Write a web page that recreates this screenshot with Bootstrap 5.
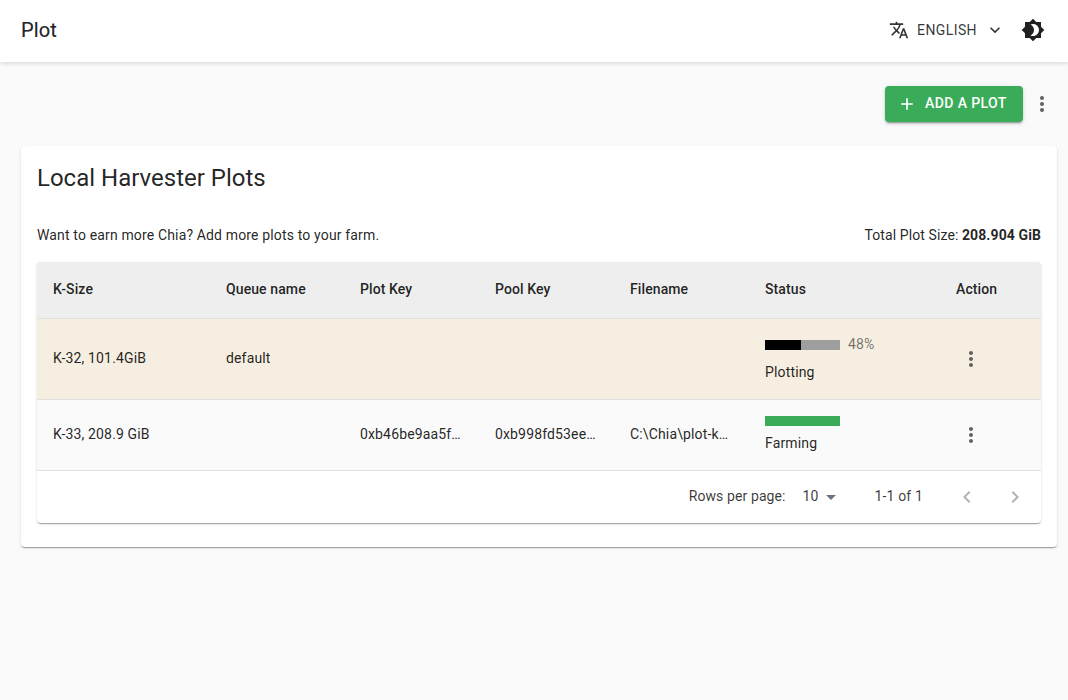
<!DOCTYPE html>
<html lang="en"><head><meta charset="utf-8"><title>Plot</title>
<link href="https://cdn.jsdelivr.net/npm/bootstrap@5.3.0/dist/css/bootstrap.min.css" rel="stylesheet">
<style>
body{background:#fafafa;font-family:Roboto,"Liberation Sans",sans-serif;color:rgba(0,0,0,.87);font-size:14px;height:700px;overflow:hidden}
svg{fill:currentColor;display:block;flex:none}
.top-bar{height:62px;background:#fff;box-shadow:0 1px 5px 0 rgba(0,0,0,.1),0 2px 4px 0 rgba(0,0,0,.05);padding:0 23px 3px 21px}
.top-title{font-size:20px;margin:0;line-height:32px;font-weight:400;letter-spacing:.15px;-webkit-text-stroke:.2px}
.lang-btn{font-size:14px;letter-spacing:.4px;color:rgba(0,0,0,.8);margin-right:16px}
.lang-label{margin:0 8px;line-height:1}
.page-wrap{padding:24px 11px 0 21px}
.act-row{height:36px;margin-bottom:24px}
.add-btn{background:#3aac59;border:0;color:#fff;font-weight:500;font-size:14px;letter-spacing:.4px;height:36px;width:138px;border-radius:4px;box-shadow:0 3px 1px -2px rgba(0,0,0,.2),0 2px 2px 0 rgba(0,0,0,.14),0 1px 5px 0 rgba(0,0,0,.12);gap:8px}
.add-btn.btn{padding:0 0 1px 12px}
.add-btn:hover{background:#3aac59;color:#fff}
.more-top{color:#616161;margin:0 3px 0 7px}
.outer-panel{background:#fff;border:0;border-radius:4px;box-shadow:0 2px 1px -1px rgba(0,0,0,.2),0 1px 1px 0 rgba(0,0,0,.14),0 1px 3px 0 rgba(0,0,0,.12);padding:16px;height:401px;width:1036px}
.panel-title{font-size:24px;font-weight:400;line-height:32px;margin:0 0 31px}
.info-row{line-height:20px;margin-bottom:17px;letter-spacing:.15px}
.info-total{letter-spacing:.1px}
.info-row b{font-weight:700}
.inner-panel{border-radius:4px;box-shadow:0 2px 1px -1px rgba(0,0,0,.2),0 1px 1px 0 rgba(0,0,0,.14),0 1px 3px 0 rgba(0,0,0,.12);background:#fff;overflow:hidden}
.plots{table-layout:fixed;width:1004px;margin:0;border-collapse:collapse;--bs-table-bg:transparent}
.plots th,.plots td{padding:0 16px;vertical-align:middle;border-bottom:1px solid #e0e0e0;white-space:nowrap;font-size:14px;color:rgba(0,0,0,.87);letter-spacing:.15px}
.plots th{font-weight:500;height:56px;background:#eee;letter-spacing:.1px}
.c1{width:173px}.c2{width:134px}.c3{width:135px}.c6{width:191px}.c7{width:101px}
.row-plotting td{height:81px;background:#f6eee0}
.row-farming td{height:71px;background:#fafafa}
.plots td.status-a{padding-top:2px}
.plots td.status-b{padding-bottom:1px}
.bar-track{width:75px;height:10px;flex:none;background:#9e9e9e}
.bar-fill{background:#000;height:100%}
.bar-done{background:#3aac59}
.pct{color:rgba(0,0,0,.54);font-size:14px;margin:0 0 2px 8px;line-height:12px}
.stat-plot{line-height:20px}
.status-a .stat-plot{margin-top:10px}
.status-b .stat-plot{margin-top:7px}
.row-icon{color:#616161;margin-left:3px}
.pager{height:52px;padding-right:14px;color:rgba(0,0,0,.78);letter-spacing:.1px}
.pg-num{margin-left:17px}
.pg-range{margin:0 32px;letter-spacing:.15px}
.pg-nav{color:rgba(0,0,0,.3)}
</style></head><body>
<nav class="top-bar d-flex align-items-center justify-content-between">
  <h1 class="top-title">Plot</h1>
  <div class="d-flex align-items-center">
    <div class="lang-btn d-flex align-items-center">
      <svg width="20" height="20" viewBox="0 0 24 24"><path d="M12.87 15.07l-2.54-2.51.03-.03c1.74-1.94 2.98-4.17 3.71-6.53H17V4h-7V2H8v2H1v1.99h11.17C11.5 7.92 10.44 9.75 9 11.35 8.07 10.32 7.3 9.19 6.69 8h-2c.73 1.63 1.73 3.17 2.98 4.56l-5.09 5.02L4 19l5-5 3.11 3.11.76-2.04zM18.5 10h-2L12 22h2l1.12-3h4.75L21 22h2l-4.5-12zm-2.62 7l1.62-4.33L19.12 17h-3.24z"/></svg>
      <span class="lang-label">ENGLISH</span>
      <svg width="20" height="20" viewBox="0 0 24 24"><path d="M16.59 8.59L12 13.17 7.41 8.59 6 10l6 6 6-6z"/></svg>
    </div>
    <svg width="24" height="24" viewBox="0 0 24 24"><path d="M20 8.69V4h-4.69L12 .69 8.69 4H4v4.69L.69 12 4 15.31V20h4.69L12 23.31 15.31 20H20v-4.69L23.31 12 20 8.69zM12 18c-.89 0-1.74-.2-2.5-.55C11.56 16.5 13 14.42 13 12s-1.44-4.5-3.5-5.45C10.26 6.2 11.11 6 12 6c3.31 0 6 2.69 6 6s-2.69 6-6 6z"/></svg>
  </div>
</nav>
<main class="page-wrap">
  <div class="act-row d-flex justify-content-end align-items-center">
    <button class="btn add-btn d-flex align-items-center" type="button">
      <svg width="20" height="20" viewBox="0 0 24 24"><path d="M19 13h-6v6h-2v-6H5v-2h6V5h2v6h6v2z"/></svg>ADD A PLOT
    </button>
    <svg class="more-top" width="24" height="24" viewBox="0 0 24 24"><path d="M12 8c1.1 0 2-.9 2-2s-.9-2-2-2-2 .9-2 2 .9 2 2 2zm0 2c-1.1 0-2 .9-2 2s.9 2 2 2 2-.9 2-2-.9-2-2-2zm0 6c-1.1 0-2 .9-2 2s.9 2 2 2 2-.9 2-2-.9-2-2-2z"/></svg>
  </div>
  <section class="outer-panel">
    <h2 class="panel-title">Local Harvester Plots</h2>
    <div class="info-row d-flex justify-content-between">
      <span>Want to earn more Chia? Add more plots to your farm.</span>
      <span class="info-total">Total Plot Size: <b>208.904 GiB</b></span>
    </div>
    <div class="inner-panel">
      <table class="table plots">
        <thead><tr><th class="c1">K-Size</th><th class="c2">Queue name</th><th class="c3">Plot Key</th><th class="c3">Pool Key</th><th class="c3">Filename</th><th class="c6">Status</th><th class="c7">Action</th></tr></thead>
        <tbody>
          <tr class="row-plotting"><td>K-32, 101.4GiB</td><td>default</td><td></td><td></td><td></td>
            <td class="status-a"><div class="d-flex align-items-center"><div class="bar-track"><div class="bar-fill" style="width:48%"></div></div><span class="pct">48%</span></div><div class="stat-plot">Plotting</div></td>
            <td><svg class="row-icon" width="24" height="24" viewBox="0 0 24 24"><path d="M12 8c1.1 0 2-.9 2-2s-.9-2-2-2-2 .9-2 2 .9 2 2 2zm0 2c-1.1 0-2 .9-2 2s.9 2 2 2 2-.9 2-2-.9-2-2-2zm0 6c-1.1 0-2 .9-2 2s.9 2 2 2 2-.9 2-2-.9-2-2-2z"/></svg></td></tr>
          <tr class="row-farming"><td>K-33, 208.9 GiB</td><td></td><td>0xb46be9aa5f…</td><td>0xb998fd53ee…</td><td>C:\Chia\plot-k…</td>
            <td class="status-b"><div class="bar-track bar-done"></div><div class="stat-plot">Farming</div></td>
            <td><svg class="row-icon" width="24" height="24" viewBox="0 0 24 24"><path d="M12 8c1.1 0 2-.9 2-2s-.9-2-2-2-2 .9-2 2 .9 2 2 2zm0 2c-1.1 0-2 .9-2 2s.9 2 2 2 2-.9 2-2-.9-2-2-2zm0 6c-1.1 0-2 .9-2 2s.9 2 2 2 2-.9 2-2-.9-2-2-2z"/></svg></td></tr>
        </tbody>
      </table>
      <div class="pager d-flex align-items-center justify-content-end">
        <span>Rows per page:</span><span class="pg-num">10</span>
        <svg width="24" height="24" viewBox="0 0 24 24" class="text-secondary"><path d="M7 10l5 5 5-5z"/></svg>
        <span class="pg-range">1-1 of 1</span>
        <svg class="pg-nav me-4" width="24" height="24" viewBox="0 0 24 24"><path d="M15.41 7.41L14 6l-6 6 6 6 1.41-1.41L10.83 12z"/></svg>
        <svg class="pg-nav" width="24" height="24" viewBox="0 0 24 24"><path d="M10 6L8.59 7.41 13.17 12l-4.58 4.59L10 18l6-6z"/></svg>
      </div>
    </div>
  </section>
</main>
<script src="https://cdn.jsdelivr.net/npm/bootstrap@5.3.0/dist/js/bootstrap.bundle.min.js"></script>
</body></html>
